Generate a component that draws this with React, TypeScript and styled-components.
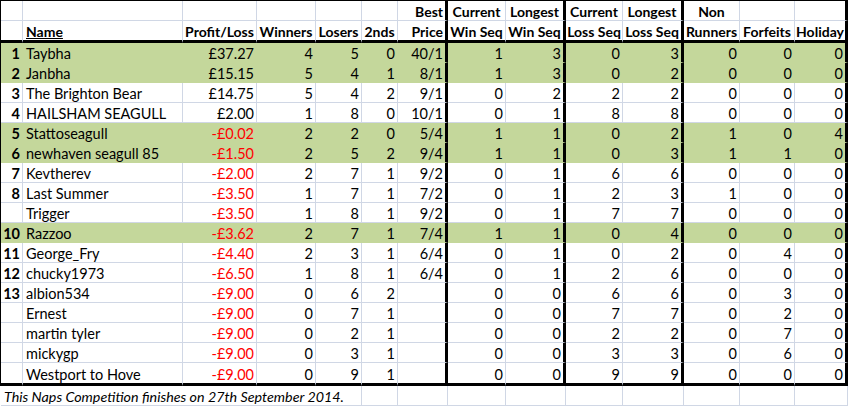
import styled, { createGlobalStyle, css } from "styled-components";

const GRID = "#d0d7e5";
const GREEN = "#c4d79b";
const COLS = "22px 160px 74px 59px 46px 36px 50px 58px 60px 57px 61px 56px 55px 53px";
const THICK = [6, 8, 10, 13];

type Align = "left" | "right" | "center";

type Entry = [string, string, string, number, number, number, string, number, number, number, number, number, number, number, boolean];

const rows: Entry[] = [
    ["1", "Taybha", "£37.27", 4, 5, 0, "40/1", 1, 3, 0, 3, 0, 0, 0, true],
    ["2", "Janbha", "£15.15", 5, 4, 1, "8/1", 1, 3, 0, 2, 0, 0, 0, true],
    ["3", "The Brighton Bear", "£14.75", 5, 4, 2, "9/1", 0, 2, 2, 2, 0, 0, 0, false],
    ["4", "HAILSHAM SEAGULL", "£2.00", 1, 8, 0, "10/1", 0, 1, 8, 8, 0, 0, 0, false],
    ["5", "Stattoseagull", "-£0.02", 2, 2, 0, "5/4", 1, 1, 0, 2, 1, 0, 4, true],
    ["6", "newhaven seagull 85", "-£1.50", 2, 5, 2, "9/4", 1, 1, 0, 3, 1, 1, 0, true],
    ["7", "Kevtherev", "-£2.00", 2, 7, 1, "9/2", 0, 1, 6, 6, 0, 0, 0, false],
    ["8", "Last Summer", "-£3.50", 1, 7, 1, "7/2", 0, 1, 2, 3, 1, 0, 0, false],
    ["", "Trigger", "-£3.50", 1, 8, 1, "9/2", 0, 1, 7, 7, 0, 0, 0, false],
    ["10", "Razzoo", "-£3.62", 2, 7, 1, "7/4", 1, 1, 0, 4, 0, 0, 0, true],
    ["11", "George_Fry", "-£4.40", 2, 3, 1, "6/4", 0, 1, 0, 2, 0, 4, 0, false],
    ["12", "chucky1973", "-£6.50", 1, 8, 1, "6/4", 0, 1, 2, 6, 0, 0, 0, false],
    ["13", "albion534", "-£9.00", 0, 6, 2, "", 0, 0, 6, 6, 0, 3, 0, false],
    ["", "Ernest", "-£9.00", 0, 7, 1, "", 0, 0, 7, 7, 0, 2, 0, false],
    ["", "martin tyler", "-£9.00", 0, 2, 1, "", 0, 0, 2, 2, 0, 7, 0, false],
    ["", "mickygp", "-£9.00", 0, 3, 1, "", 0, 0, 3, 3, 0, 6, 0, false],
    ["", "Westport to Hove", "-£9.00", 0, 9, 1, "", 0, 0, 9, 9, 0, 0, 0, false],
];

const headTop: [string, Align][] = [
    ["", "left"], ["", "left"], ["", "left"], ["", "left"], ["", "left"], ["", "left"],
    ["Best", "right"], ["Current", "center"], ["Longest", "center"], ["Current", "center"],
    ["Longest", "center"], ["Non", "center"], ["", "left"], ["", "left"],
];

const headBottom: [string, Align][] = [
    ["", "left"], ["Name", "left"], ["Profit/Loss", "center"], ["Winners", "center"],
    ["Losers", "center"], ["2nds", "center"], ["Price", "right"], ["Win Seq", "center"],
    ["Win Seq", "center"], ["Loss Seq", "center"], ["Loss Seq", "center"], ["Runners", "center"],
    ["Forfeits", "center"], ["Holiday", "center"],
];

export default function App() {
    return (
        <>
            <GlobalStyle />
            <Sheet>
                <Table>
                    <Row $height={20}>
                        {headTop.map(([t, a], i) => (
                            <HeadCell key={i} $align={a} $thick={THICK.includes(i)} $bold>{t}</HeadCell>
                        ))}
                    </Row>
                    <Row $height={22}>
                        {headBottom.map(([t, a], i) => (
                            <HeadCell key={i} $align={a} $thick={THICK.includes(i)} $bold $heavyBottom>
                                {i === 1 ? <Underlined>{t}</Underlined> : t}
                            </HeadCell>
                        ))}
                    </Row>
                    {rows.map((r, ri) => {
                        const last = ri === rows.length - 1;
                        const green = r[14];
                        const values: (string | number)[] = r.slice(0, 14) as (string | number)[];
                        return (
                            <Row key={ri} $height={last ? 23 : 20} $green={green}>
                                {values.map((v, i) => (
                                    <Cell
                                        key={i}
                                        $align={i === 1 ? "left" : "right"}
                                        $thick={THICK.includes(i)}
                                        $green={green}
                                        $bold={i === 0}
                                        $red={i === 2 && String(v).startsWith("-")}
                                        $heavyBottom={last}
                                    >
                                        {v}
                                    </Cell>
                                ))}
                            </Row>
                        );
                    })}
                    <FooterRow>
                        <Note>This Naps Competition finishes on 27th September 2014.</Note>
                        {Array.from({ length: 9 }).map((_, i) => (
                            <Cell key={i} $align="left" />
                        ))}
                    </FooterRow>
                </Table>
            </Sheet>
        </>
    );
}

const GlobalStyle = createGlobalStyle`
    body {
        margin: 0;
        background: #ffffff;
        font-family: Lato, "Open Sans", sans-serif;
        font-size: 14.5px;
        color: #000000;
    }
`;

const Sheet = styled.div`
    width: 850px;
    height: 406px;
    overflow: hidden;
    background: #ffffff;
`;

const Table = styled.div`
    display: flex;
    flex-direction: column;
    width: fit-content;
    border-top: 1px solid #000;
`;

const Row = styled.div<{ $height: number; $green?: boolean }>`
    display: grid;
    grid-template-columns: ${COLS};
    height: ${p => p.$height}px;
    border-left: 1px solid #000;
    background: ${p => (p.$green ? GREEN : "#ffffff")};
`;

const FooterRow = styled.div`
    display: grid;
    grid-template-columns: ${COLS};
    height: 20px;
    border-left: 1px solid transparent;
`;

const Cell = styled.div<{
    $align: Align;
    $thick?: boolean;
    $green?: boolean;
    $bold?: boolean;
    $red?: boolean;
    $heavyBottom?: boolean;
}>`
    display: flex;
    align-items: flex-end;
    justify-content: ${p => (p.$align === "left" ? "flex-start" : p.$align === "right" ? "flex-end" : "center")};
    padding: 0 2px 0 3px;
    line-height: 16px;
    white-space: nowrap;
    overflow: hidden;
    font-weight: ${p => (p.$bold ? 700 : 400)};
    color: ${p => (p.$red ? "#ff0000" : "#000000")};
    border-right: 1px solid ${p => (p.$green ? GREEN : GRID)};
    border-bottom: 1px solid ${p => (p.$green ? GREEN : GRID)};
    ${p => p.$align === "right" && css`padding: 0 2px 0 1px;`}
    ${p => p.$align === "center" && css`padding: 0;`}
    ${p => p.$thick && css`border-right: 3px solid #000;`}
    ${p => p.$heavyBottom && css`border-bottom: 3px solid #000;`}
`;

const HeadCell = styled(Cell)`
    font-size: 14px;
`;

const Underlined = styled.span`
    text-decoration: underline;
`;

const Note = styled(Cell).attrs({ $align: "left" as Align })`
    grid-column: 1 / span 5;
    font-style: italic;
    font-size: 14.3px;
    padding-left: 3px;
`;
